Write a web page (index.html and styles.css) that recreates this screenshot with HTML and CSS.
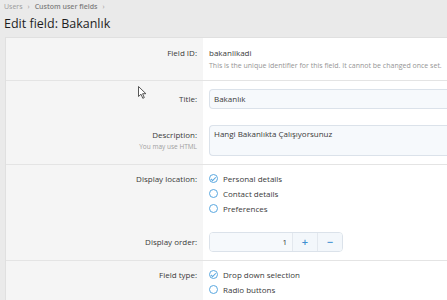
FILE: index.html
```
<!DOCTYPE html>
<html lang="en">
<head>
    <meta charset="UTF-8">
    <title>Edit field: Bakanlık</title>
    <link rel="stylesheet" href="styles.css">
</head>
<body>
    <div class="breadcrumb">
        <span>Users</span><span class="sep">›</span><span class="crumb-bold">Custom user fields</span><span class="sep">›</span>
    </div>
    <h1 class="page-title">Edit field: Bakanlık</h1>

    <div class="block">
        <div class="form-row separated">
            <div class="row-label">Field ID:</div>
            <div class="row-input">
                <div class="static">bakanlikadi</div>
                <div class="hint">This is the unique identifier for this field. It cannot be changed once set.</div>
            </div>
        </div>

        <div class="form-row">
            <div class="row-label"><span class="label-text">Title:</span></div>
            <div class="row-input">
                <div class="input">Bakanlık</div>
            </div>
        </div>

        <div class="form-row separated">
            <div class="row-label">
                <span class="label-text">Description:</span>
                <div class="label-hint">You may use HTML</div>
            </div>
            <div class="row-input">
                <div class="input textarea">Hangi Bakanlıkta Çalışıyorsunuz</div>
            </div>
        </div>

        <div class="form-row choice-row">
            <div class="row-label">Display location:</div>
            <div class="row-input">
                <ul class="choices">
                    <li><span class="check checked"></span>Personal details</li>
                    <li><span class="check"></span>Contact details</li>
                    <li><span class="check"></span>Preferences</li>
                </ul>
            </div>
        </div>

        <div class="form-row separated">
            <div class="row-label"><span class="label-text">Display order:</span></div>
            <div class="row-input">
                <div class="number-box">
                    <div class="number-field">1</div>
                    <div class="number-btn">+</div>
                    <div class="number-btn">−</div>
                </div>
            </div>
        </div>

        <div class="form-row choice-row">
            <div class="row-label">Field type:</div>
            <div class="row-input">
                <ul class="choices">
                    <li><span class="check checked"></span>Drop down selection</li>
                    <li><span class="check"></span>Radio buttons</li>
                </ul>
            </div>
        </div>
    </div>

    <!-- mouse pointer left in the capture -->
    <svg class="cursor" width="9" height="13" viewBox="0 0 9 13">
        <path d="M0.5 0.5 L0.5 10.5 L3 8.2 L4.8 12.3 L6.3 11.6 L4.6 7.7 L7.9 7.7 Z" fill="#fff" stroke="#444" stroke-width="0.9" stroke-linejoin="round"/>
    </svg>
</body>
</html>
```

FILE: styles.css
```
html, body {
    margin: 0;
    overflow: hidden;
}

body {
    background-color: #eaeaea;
    color: #3a3a3a;
    font-family: 'Open Sans', 'Noto Sans', sans-serif;
    font-size: 8px;
    width: 447px;
    height: 300px;
    position: relative;
}

.breadcrumb {
    padding: 1px 0 0 4px;
    height: 12px;
    line-height: 12px;
    font-size: 7px;
    color: #9a9a9a;
}

.sep {
    margin: 0 5px;
}

.crumb-bold {
    font-weight: 600;
    color: #808080;
}

.page-title {
    margin: 0;
    padding-left: 4px;
    font-size: 12.5px;
    font-weight: 400;
    line-height: 22px;
    color: #1e1e1e;
}

.block {
    margin: 2px 0 0 5px;
    width: 620px;
    background: linear-gradient(to right, #f5f5f5 197px, #fff 197px);
    border-top: 1px solid #e0e0e0;
    border-left: 1px solid #e0e0e0;
}

.form-row {
    display: flex;
}

.form-row.separated {
    border-bottom: 1px solid #e4e4e4;
}

.row-label {
    width: 191px;
    flex: none;
    text-align: right;
    padding: 8px 6px 8px 0;
    line-height: 14px;
}

.label-text {
    display: inline-block;
    padding-top: 3px;
}

.label-hint {
    font-size: 6.5px;
    color: #a0a0a0;
    line-height: 9px;
}

.row-input {
    flex: 1;
    padding: 8px 6px;
    line-height: 14px;
}

.choice-row .row-label {
    padding-top: 7px;
}

.choice-row .row-input {
    padding-top: 6px;
}

.hint {
    font-size: 7px;
    color: #959595;
    line-height: 12px;
}

.input {
    height: 18px;
    line-height: 18px;
    padding: 0 4px;
    background: #f6f9fc;
    border: 1px solid #dbe2ea;
    border-right: none;
    border-radius: 4px 0 0 4px;
}

.textarea {
    height: 29px;
    line-height: 16px;
}

.choices {
    list-style: none;
    margin: 0;
    padding: 0;
}

.choices li {
    display: flex;
    align-items: center;
    height: 15px;
}

.check {
    width: 7px;
    height: 7px;
    border: 1px solid #5aa8e0;
    border-radius: 50%;
    margin-right: 5px;
    position: relative;
    flex: none;
}

.check.checked::after {
    content: '';
    position: absolute;
    left: 2px;
    top: 1px;
    width: 2px;
    height: 3.5px;
    border-right: 1px solid #5aa8e0;
    border-bottom: 1px solid #5aa8e0;
    transform: rotate(45deg);
}

.number-box {
    display: flex;
    width: 134px;
    height: 20px;
    border: 1px solid #dbe2ea;
    border-radius: 4px;
    box-sizing: border-box;
    overflow: hidden;
}

.number-field {
    flex: 1;
    background: #f6f9fc;
    text-align: right;
    padding-right: 5px;
    line-height: 18px;
}

.number-btn {
    width: 24px;
    text-align: center;
    line-height: 18px;
    font-size: 11px;
    font-weight: 600;
    color: #3d8fd1;
    background: #f3f7fb;
    border-left: 1px solid #e3e8ee;
}

.cursor {
    position: absolute;
    left: 138px;
    top: 86px;
}
```
